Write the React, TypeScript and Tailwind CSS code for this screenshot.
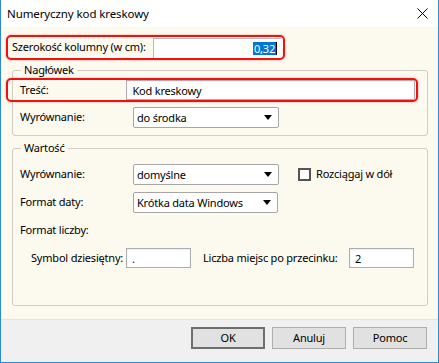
const font = "font-['Noto_Sans',sans-serif]";

function Arrow() {
  return (
    <svg width="8" height="5" viewBox="0 0 8 5" className="shrink-0">
      <path d="M0 0H8L4 5Z" fill="#000" />
    </svg>
  );
}

function Select({ value, width }: { value: string; width: string }) {
  return (
    <div
      className={`${width} flex h-[21px] items-center justify-between rounded-[2px] border border-[#a6a6a6] bg-white pl-[3px] pr-[6px]`}
    >
      <span className="leading-none">{value}</span>
      <Arrow />
    </div>
  );
}

function TextBox({ value, width }: { value: string; width: string }) {
  return (
    <div
      className={`${width} flex h-[20px] items-center border border-[#abadb3] bg-white px-[5px] shadow-[inset_0_1px_2px_rgba(0,0,0,0.08)]`}
    >
      <span className="leading-none">{value}</span>
    </div>
  );
}

function Button({ label, primary }: { label: string; primary?: boolean }) {
  return (
    <div
      className={`flex h-[22px] w-[74px] items-center justify-center bg-[#e1e1e1] ${
        primary ? "border-2 border-[#6e6e6e]" : "border border-[#adadad]"
      }`}
    >
      {label}
    </div>
  );
}

export default function App() {
  return (
    <div className={`${font} flex h-[363px] w-[439px] flex-col whitespace-nowrap border-x border-b border-[#2a8ad8] bg-white text-[11px] tracking-[-0.2px] text-black`}>
      {/* title bar */}
      <div className="flex h-[27px] shrink-0 items-center justify-between pl-[6px] pr-[10px]">
        <span className="text-[11.5px] tracking-[-0.1px]">Numeryczny kod kreskowy</span>
        <svg width="11" height="11" viewBox="0 0 11 11">
          <path d="M0.5 0.5L10.5 10.5M10.5 0.5L0.5 10.5" stroke="#000" strokeWidth="1" />
        </svg>
      </div>

      <div className="flex flex-1 flex-col bg-[#fcf9ee]">
        {/* column width */}
        <div className="ml-[5px] mt-[8px] flex h-[25px] w-[279px] items-center rounded-[5px] border-2 border-[#f01010] pl-[4px] shadow-[0_0_2px_rgba(255,80,80,0.6)]">
          <span className="w-[141px]">Szerokość kolumny (w cm):</span>
          <div className="flex h-[20px] w-[128px] items-center justify-end border-l border-t border-[#b8b8b8] bg-white pr-[4px]">
            <span className="bg-[#0078d7] px-[1px] leading-[13px] text-white">0,32</span>
            <span className="h-[13px] w-px bg-black" />
          </div>
        </div>

        {/* header group */}
        <fieldset className="ml-[11px] mt-[2px] w-[416px] rounded-[3px] border border-[#d0cdc4] pb-[7px]">
          <legend className="ml-[8px] px-[3px] leading-[16px]">Nagłówek</legend>
          <div className="-ml-[7px] flex h-[24px] w-[412px] items-center rounded-[5px] border-2 border-[#f01010] pl-[12px] pr-[1px] shadow-[0_0_2px_rgba(255,80,80,0.6)]">
            <span className="w-[107px]">Treść:</span>
            <TextBox value="Kod kreskowy" width="w-[290px]" />
          </div>
          <div className="mt-[5px] flex items-center pl-[7px]">
            <span className="w-[113px]">Wyrównanie:</span>
            <Select value="do środka" width="w-[146px]" />
          </div>
        </fieldset>

        {/* value group */}
        <fieldset className="ml-[11px] mt-[4px] w-[416px] rounded-[3px] border border-[#d0cdc4] pb-[37px]">
          <legend className="ml-[8px] px-[3px] leading-[16px]">Wartość</legend>
          <div className="mt-[8px] flex items-center pl-[7px]">
            <span className="w-[113px]">Wyrównanie:</span>
            <Select value="domyślne" width="w-[146px]" />
            <div className="ml-[19px] h-[13px] w-[13px] border-2 border-[#555] bg-white" />
            <span className="ml-[5px]">Rozciągaj w dół</span>
          </div>
          <div className="mt-[7px] flex items-center pl-[7px]">
            <span className="w-[113px]">Format daty:</span>
            <Select value="Krótka data Windows" width="w-[145px]" />
          </div>
          <div className="mt-[8px] flex h-[18px] items-center pl-[7px]">Format liczby:</div>
          <div className="mt-[9px] flex items-center pl-[18px]">
            <span className="w-[95px]">Symbol dziesiętny:</span>
            <TextBox value="." width="w-[65px]" />
            <span className="ml-[12px] w-[146px]">Liczba miejsc po przecinku:</span>
            <TextBox value="2" width="w-[65px]" />
          </div>
        </fieldset>
        <div className="flex-1" />
      </div>

      {/* buttons */}
      <div className="flex h-[43px] shrink-0 items-start justify-end gap-[7px] border-t border-[#e3e3e3] bg-[#f0f0f0] pr-[11px] pt-[7px]">
        <Button label="OK" primary />
        <Button label="Anuluj" />
        <Button label="Pomoc" />
      </div>
    </div>
  );
}
